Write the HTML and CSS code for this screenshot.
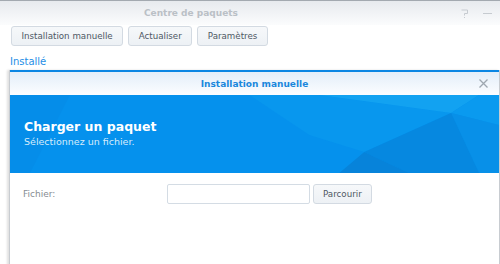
FILE: index.html
```html
<!DOCTYPE html>
<html lang="fr">
<head>
    <meta charset="UTF-8">
    <title>Centre de paquets</title>
    <link rel="stylesheet" href="styles.css">
</head>
<body>
    <!-- Window title bar -->
    <div class="titlebar">
        <span class="title">Centre de paquets</span>
        <div class="win-controls">
            <svg class="help" viewBox="0 0 8 9" width="8" height="9">
                <path d="M0.5 1 H6.5 V4.5 H3.5 V6.5 M3.5 8 V9" fill="none" stroke="#c6cbd0" stroke-width="1"/>
            </svg>
            <span class="minimize"></span>
        </div>
    </div>

    <!-- Toolbar -->
    <div class="toolbar">
        <button>Installation manuelle</button>
        <button>Actualiser</button>
        <button>Paramètres</button>
    </div>

    <div class="tab">Installé</div>

    <!-- Manual install dialog -->
    <div class="dialog">
        <div class="dialog-header">
            <span class="dialog-title">Installation manuelle</span>
            <svg class="close" viewBox="0 0 9 9" width="9" height="9">
                <path d="M0.5 0.5 L8.5 8.5 M8.5 0.5 L0.5 8.5" stroke="#9ea7b0" stroke-width="1.3"/>
            </svg>
        </div>

        <div class="banner">
            <svg class="banner-art" viewBox="0 0 490 78" preserveAspectRatio="none">
                <rect width="490" height="78" fill="#0591ed"/>
                <polygon points="240,0 310,0 442,18 355,57 300,40" fill="#0897ee"/>
                <polygon points="310,0 470,0 442,18" fill="#12a2f1"/>
                <polygon points="470,0 490,0 490,30 442,18" fill="#0a9aef"/>
                <polygon points="442,18 490,30 490,78 470,78" fill="#0890e8"/>
                <polygon points="442,18 470,78 400,78 355,57" fill="#0688e0"/>
                <polygon points="355,57 400,78 330,78" fill="#0783da"/>
                <polygon points="0,0 60,0 20,78 0,78" fill="#058de9"/>
            </svg>
            <div class="banner-text">
                <h2>Charger un paquet</h2>
                <p>Sélectionnez un fichier.</p>
            </div>
        </div>

        <div class="dialog-body">
            <div class="form-row">
                <label>Fichier:</label>
                <input type="text">
                <button class="browse">Parcourir</button>
            </div>
        </div>
    </div>
</body>
</html>
```

FILE: styles.css
```css
/* General Styling */
body {
    font-family: "DejaVu Sans", Verdana, sans-serif;
    margin: 0;
    padding: 0;
    width: 500px;
    height: 264px;
    overflow: hidden;
    background-color: #fff;
    color: #4a5560;
}

/* Window title bar */
.titlebar {
    height: 24px;
    border-top: 1px solid #a3a9b0;
    background: linear-gradient(#e7eaee, #fbfcfd);
    display: flex;
    align-items: center;
}

.title {
    margin-left: 144px;
    font-size: 9px;
    font-weight: bold;
    color: #bac0c6;
}

.win-controls {
    margin-left: auto;
    margin-right: 8px;
    display: flex;
    align-items: center;
    gap: 14px;
}

.help {
    display: block;
}

.minimize {
    width: 9px;
    height: 1px;
    background-color: #c6cbd0;
}

/* Toolbar */
.toolbar {
    display: flex;
    gap: 5px;
    padding: 1px 0 0 11px;
}

.toolbar button,
.browse {
    font-family: "DejaVu Sans", Verdana, sans-serif;
    font-size: 8.7px;
    color: #4e5864;
    height: 20px;
    padding: 0 9.5px;
    background: linear-gradient(#f6f8fa, #edf1f5);
    border: 1px solid #d3dae2;
    border-radius: 3px;
}

.tab {
    font-size: 10px;
    color: #1e8ee6;
    margin: 10px 0 0 10px;
    height: 14px;
}

/* Dialog */
.dialog {
    margin: 0 0 0 9px;
    height: 200px;
    border-left: 1px solid #c8ccd1;
    border-right: 1px solid #c8ccd1;
    box-shadow: -2px 0 2px rgba(0, 0, 0, 0.12);
}

.dialog-header {
    height: 23px;
    border-top: 2px solid #0b86e3;
    background: linear-gradient(#e3eef9, #fcfdff);
    display: flex;
    align-items: center;
}

.dialog-header::before {
    content: "";
    width: 20px;
    margin-right: auto;
}

.dialog-title {
    font-size: 9px;
    font-weight: bold;
    color: #1a87dc;
}

.close {
    display: block;
    margin-left: auto;
    margin-right: 11px;
}

.banner {
    height: 78px;
    display: grid;
}

.banner-art,
.banner-text {
    grid-area: 1 / 1;
}

.banner-art {
    width: 100%;
    height: 78px;
    display: block;
}

.banner-text {
    padding: 24px 0 0 14px;
    color: #fff;
}

.banner-text h2 {
    margin: 0;
    font-size: 12.5px;
    font-weight: bold;
}

.banner-text p {
    margin: 2px 0 0 0;
    font-size: 9.5px;
    color: #d6ecfb;
}

.dialog-body {
    padding: 11px 0 0 13px;
}

.form-row {
    display: flex;
    align-items: center;
}

.form-row label {
    font-size: 9px;
    color: #868c92;
    width: 144px;
}

.form-row input {
    width: 143px;
    height: 20px;
    box-sizing: border-box;
    border: 1px solid #d4dce4;
    border-radius: 2px;
    margin: 0 3px 0 0;
    padding: 0;
}

.browse {
    font-size: 8.7px;
    padding: 0 9px;
}
```
